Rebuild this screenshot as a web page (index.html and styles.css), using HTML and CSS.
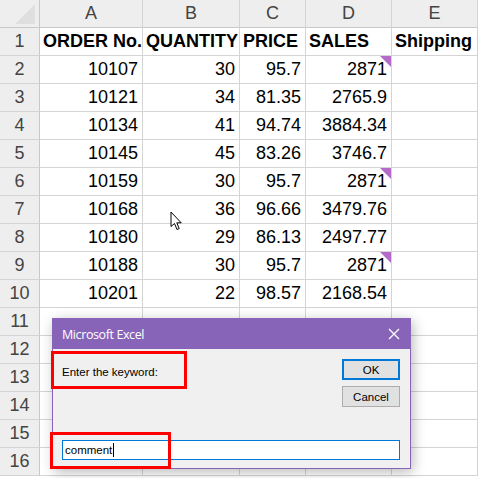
FILE: index.html
```html
<!DOCTYPE html>
<html>
<head>
<meta charset="utf-8">
<link rel="stylesheet" href="styles.css">
</head>
<body>
<div class="sheet">
  <div class="corner"><span class="tri"></span></div>
  <div class="colh">A</div><div class="colh">B</div><div class="colh">C</div><div class="colh">D</div><div class="colh">E</div>

  <div class="rowh">1</div><div class="c b">ORDER No.</div><div class="c b">QUANTITY</div><div class="c b">PRICE</div><div class="c b">SALES</div><div class="c b">Shipping</div>
  <div class="rowh">2</div><div class="c n">10107</div><div class="c n">30</div><div class="c n">95.7</div><div class="c n cm">2871</div><div class="c"></div>
  <div class="rowh">3</div><div class="c n">10121</div><div class="c n">34</div><div class="c n">81.35</div><div class="c n">2765.9</div><div class="c"></div>
  <div class="rowh">4</div><div class="c n">10134</div><div class="c n">41</div><div class="c n">94.74</div><div class="c n">3884.34</div><div class="c"></div>
  <div class="rowh">5</div><div class="c n">10145</div><div class="c n">45</div><div class="c n">83.26</div><div class="c n">3746.7</div><div class="c"></div>
  <div class="rowh">6</div><div class="c n">10159</div><div class="c n">30</div><div class="c n">95.7</div><div class="c n cm">2871</div><div class="c"></div>
  <div class="rowh">7</div><div class="c n">10168</div><div class="c n">36</div><div class="c n">96.66</div><div class="c n">3479.76</div><div class="c"></div>
  <div class="rowh">8</div><div class="c n">10180</div><div class="c n">29</div><div class="c n">86.13</div><div class="c n">2497.77</div><div class="c"></div>
  <div class="rowh">9</div><div class="c n">10188</div><div class="c n">30</div><div class="c n">95.7</div><div class="c n cm">2871</div><div class="c"></div>
  <div class="rowh">10</div><div class="c n">10201</div><div class="c n">22</div><div class="c n">98.57</div><div class="c n">2168.54</div><div class="c"></div>
  <div class="rowh">11</div><div class="c"></div><div class="c"></div><div class="c"></div><div class="c"></div><div class="c"></div>
  <div class="rowh">12</div><div class="c"></div><div class="c"></div><div class="c"></div><div class="c"></div><div class="c"></div>
  <div class="rowh">13</div><div class="c"></div><div class="c"></div><div class="c"></div><div class="c"></div><div class="c"></div>
  <div class="rowh">14</div><div class="c"></div><div class="c"></div><div class="c"></div><div class="c"></div><div class="c"></div>
  <div class="rowh">15</div><div class="c"></div><div class="c"></div><div class="c"></div><div class="c"></div><div class="c"></div>
  <div class="rowh">16</div><div class="c"></div><div class="c"></div><div class="c"></div><div class="c"></div><div class="c"></div>
</div>

<svg class="cursor" width="13" height="20" viewBox="0 0 13 20">
  <path d="M1 1 L1 15.5 L4.5 12.5 L7 18.5 L9.2 17.6 L6.8 11.8 L11.2 11.8 Z" fill="#fff" stroke="#000" stroke-width="1" stroke-linejoin="miter"/>
</svg>

<div class="dialog">
  <div class="titlebar">
    <span class="title">Microsoft Excel</span>
    <svg class="close" width="12" height="12" viewBox="0 0 12 12"><path d="M1 1 L11 11 M11 1 L1 11" stroke="#fff" stroke-width="1.3"/></svg>
  </div>
  <div class="body">
    <div class="top">
      <div class="prompt">Enter the keyword:</div>
      <div class="buttons">
        <div class="btn ok">OK</div>
        <div class="btn">Cancel</div>
      </div>
    </div>
    <div class="input"><span>comment</span><span class="caret"></span></div>
  </div>
  <div class="hl hl1"></div>
  <div class="hl hl2"></div>
</div>
</body>
</html>
```
FILE: styles.css
```css
* { box-sizing: border-box; }
html, body { margin: 0; padding: 0; background: #fff; }
body { width: 478px; height: 478px; overflow: hidden; position: relative; font-family: "Liberation Sans", Arial, sans-serif; }

.sheet {
  display: grid;
  grid-template-columns: 40px 103px 97px 66px 86px 86px;
  grid-template-rows: 28px repeat(16, 28px);
}
.corner, .colh {
  background: #eeeeee;
  border-bottom: 1px solid #c8c8c8;
  border-right: 1px solid #d4d4d4;
}
.corner { position: relative; border-right-color: #c8c8c8; }
.tri {
  position: absolute; right: 4px; bottom: 3px;
  width: 0; height: 0;
  border-left: 20px solid transparent;
  border-bottom: 20px solid #dfdfdf;
}
.colh {
  display: flex; align-items: center; justify-content: center;
  font-size: 18px; color: #444;
}
.rowh {
  background: #eeeeee;
  border-right: 1px solid #c8c8c8;
  border-bottom: 1px solid #d4d4d4;
  display: flex; align-items: center; justify-content: center;
  font-size: 18px; color: #444;
}
.c {
  border-right: 1px solid #d4d4d4;
  border-bottom: 1px solid #d4d4d4;
  display: flex; align-items: center;
  font-size: 18px; color: #000;
  padding: 0 4px;
  white-space: nowrap;
  position: relative;
}
.b { font-weight: bold; padding-left: 3px; }
.n { justify-content: flex-end; }
.cm::after {
  content: "";
  position: absolute; top: 0; right: 0;
  width: 0; height: 0;
  border-left: 11px solid transparent;
  border-top: 11px solid #b46ac9;
}

.cursor { position: absolute; left: 170px; top: 211px; }

.dialog {
  position: absolute; left: 52px; top: 318px;
  width: 359px; height: 151px;
  border: 1px solid #8764b8;
  background: #f0f0f0;
  box-shadow: 2px 3px 12px rgba(0,0,0,0.28);
  display: flex; flex-direction: column;
}
.titlebar {
  height: 30px; background: #8764b8;
  display: flex; align-items: center; justify-content: space-between;
  padding: 0 10px 0 9px;
}
.title { color: #fff; font-family: "Open Sans", sans-serif; font-size: 12.5px; letter-spacing: -0.4px; }
.close { display: block; }
.body { flex: 1; display: flex; flex-direction: column; padding: 10px 10px 8px 9px; }
.top { display: flex; justify-content: space-between; flex: 1; }
.prompt { font-size: 11.5px; color: #000; padding-top: 7px; }
.buttons { display: flex; flex-direction: column; gap: 6px; }
.btn {
  width: 58px; height: 21px;
  background: #e1e1e1; border: 1px solid #adadad;
  font-size: 11.5px; color: #000;
  display: flex; align-items: center; justify-content: center;
}
.btn.ok { border: 2px solid #0078d7; }
.input {
  height: 20px; background: #fff; border: 1px solid #0078d7;
  display: flex; align-items: center; padding-left: 2px;
  font-size: 11.5px; color: #000;
}
.caret { width: 1px; height: 14px; background: #000; margin-left: 1px; }
.hl { position: absolute; border: 3px solid #ff0000; }
.hl1 { left: -2px; top: 32px; width: 136px; height: 38px; }
.hl2 { left: -3px; top: 113px; width: 121px; height: 37px; }
```
